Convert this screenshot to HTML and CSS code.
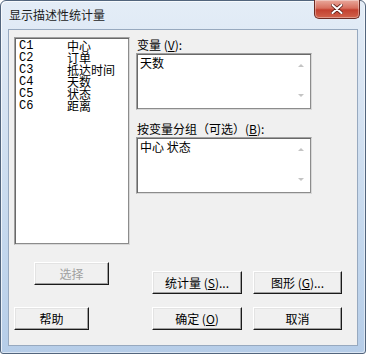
FILE: index.html
```html
<!DOCTYPE html>
<html lang="zh-CN">
<head>
  <meta charset="UTF-8">
  <title>显示描述性统计量</title>
  <link rel="stylesheet" href="styles.css">
</head>
<body>

  <div class="window">
    <div class="titlebar">
      <span class="title">显示描述性统计量</span>
      <button class="close-btn" aria-label="关闭">
        <svg width="12" height="10" viewBox="0 0 12 10">
          <path d="M1.5 1 L10.5 9 M10.5 1 L1.5 9" stroke="#5a1c16" stroke-width="3.6" stroke-linecap="round"/>
          <path d="M1.5 1 L10.5 9 M10.5 1 L1.5 9" stroke="#ffffff" stroke-width="2" stroke-linecap="round"/>
        </svg>
      </button>
    </div>

    <div class="client">
      <div class="top">
        <div class="column-list">
          <span class="col-id">C1</span><span>中心</span>
          <span class="col-id">C2</span><span>订单</span>
          <span class="col-id">C3</span><span>抵达时间</span>
          <span class="col-id">C4</span><span>天数</span>
          <span class="col-id">C5</span><span>状态</span>
          <span class="col-id">C6</span><span>距离</span>
        </div>

        <div class="fields">
          <label class="field-label">变量 (<u>V</u>):</label>
          <div class="textbox">
            <div class="textbox-text">天数</div>
            <div class="scroll">
              <span class="arrow up"></span>
              <span class="arrow down"></span>
            </div>
          </div>

          <label class="field-label second">按变量分组（可选）(<u>B</u>):</label>
          <div class="textbox">
            <div class="textbox-text">中心 状态</div>
            <div class="scroll">
              <span class="arrow up"></span>
              <span class="arrow down"></span>
            </div>
          </div>
        </div>
      </div>

      <div class="bottom">
        <div class="left-buttons">
          <button class="btn select-btn" disabled>选择</button>
          <button class="btn help-btn">帮助</button>
        </div>
        <div class="right-buttons">
          <div class="button-row">
            <button class="btn wide">统计量 (<u>S</u>)...</button>
            <button class="btn">图形 (<u>G</u>)...</button>
          </div>
          <div class="button-row">
            <button class="btn wide">确定 (<u>O</u>)</button>
            <button class="btn">取消</button>
          </div>
        </div>
      </div>
    </div>
  </div>

</body>
</html>
```

FILE: styles.css
```css
:root {
  --face: #f0f0f0;
  --frame-dark: #52657d;
  --sunken-outer: #a0a0a0;
  --sunken-inner: #696969;
  --text: #000000;
  --disabled: #a0a0a0;
  --cjk: "Noto Sans CJK SC", "Noto Sans", sans-serif;
}

* {
  box-sizing: border-box;
  margin: 0;
  padding: 0;
}

body {
  background: #ffffff;
  font-family: var(--cjk);
  font-size: 12px;
  color: var(--text);
}

.window {
  width: 366px;
  height: 354px;
  display: flex;
  flex-direction: column;
  border: 1px solid var(--frame-dark);
  border-radius: 6px 6px 3px 3px;
  padding: 0 7px 7px 7px;
  background: linear-gradient(to bottom, #e4edf7 0%, #d6e3f2 30%, #c3d7ed 70%, #b6cde8 100%);
  box-shadow: inset 1px 1px 0 rgba(255, 255, 255, 0.7), inset -1px -1px 0 rgba(255, 255, 255, 0.5);
}

.titlebar {
  height: 28px;
  display: flex;
  align-items: flex-start;
  justify-content: space-between;
}

.title {
  line-height: 28px;
  padding-left: 1px;
  color: #1b1b1b;
}

.close-btn {
  width: 46px;
  height: 19px;
  margin-top: -1px;
  margin-right: -2px;
  display: flex;
  align-items: center;
  justify-content: center;
  border: 1px solid #6d2a22;
  border-top: none;
  border-radius: 0 0 5px 5px;
  background: linear-gradient(to bottom, #e9a99c 0%, #d8705f 45%, #c3402f 55%, #d1634c 100%);
  box-shadow: inset 0 0 0 1px rgba(255, 255, 255, 0.35);
}

.client {
  flex: 1;
  border: 1px solid #97a9bf;
  background: var(--face);
  padding: 7px 0 0 5px;
}

.top {
  display: flex;
  gap: 6px;
}

/* sunken field look */
.column-list,
.textbox {
  background: #ffffff;
  border: 1px solid;
  border-color: var(--sunken-outer) #d8d8d8 #d8d8d8 var(--sunken-outer);
  box-shadow: inset 1px 1px 0 var(--sunken-inner), inset -1px -1px 0 #8c8c8c;
}

.column-list {
  width: 116px;
  height: 208px;
  padding: 2px 0 0 4px;
  display: grid;
  grid-template-columns: 48px auto;
  grid-auto-rows: 12px;
  align-content: start;
  line-height: 12px;
}

.col-id {
  font-family: "Liberation Mono", monospace;
  font-size: 12px;
}

.fields {
  width: 176px;
  display: flex;
  flex-direction: column;
}

.field-label {
  height: 16px;
  line-height: 16px;
  padding-left: 1px;
}

.field-label.second {
  margin-top: 11px;
}

.textbox {
  height: 57px;
  display: flex;
}

.textbox-text {
  flex: 1;
  padding: 2px 0 0 3px;
  line-height: 14px;
}

.scroll {
  width: 17px;
  margin: 2px 2px 2px 0;
  display: flex;
  flex-direction: column;
  justify-content: space-between;
  align-items: center;
  padding: 8px 0 10px;
}

.arrow {
  width: 0;
  height: 0;
  border-left: 3px solid transparent;
  border-right: 3px solid transparent;
}

.arrow.up {
  border-bottom: 3px solid #c4c4c4;
}

.arrow.down {
  border-top: 3px solid #c4c4c4;
}

.bottom {
  display: flex;
}

.left-buttons {
  width: 138px;
  display: flex;
  flex-direction: column;
  align-items: flex-start;
}

.select-btn {
  margin: 17px 0 0 20px;
}

.help-btn {
  margin-top: 22px;
}

.right-buttons {
  display: flex;
  flex-direction: column;
  gap: 13px;
  padding-top: 26px;
}

.button-row {
  display: flex;
  gap: 11px;
}

.btn {
  width: 75px;
  height: 23px;
  font-family: var(--cjk);
  font-size: 12px;
  line-height: 19px;
  color: var(--text);
  background: var(--face);
  border: 1px solid;
  border-color: #ffffff #1a1a1a #1a1a1a #ffffff;
  box-shadow: inset -1px -1px 0 #a0a0a0, inset 1px 1px 0 #e3e3e3;
}

.button-row .btn {
  width: 89px;
}

.button-row .btn.wide {
  width: 90px;
}

.btn:disabled {
  color: var(--disabled);
}

.btn u {
  text-underline-offset: 1px;
}
```
